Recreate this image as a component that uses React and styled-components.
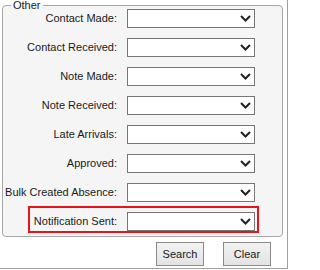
import React from 'react';
import styled, { createGlobalStyle } from 'styled-components';

const GlobalStyle = createGlobalStyle`
  html, body {
    margin: 0;
    padding: 0;
    background: #ffffff;
  }
  body {
    font-family: "Liberation Sans", Arial, sans-serif;
    font-size: 11px;
    color: #1a1a1a;
  }
`;

const Panel = styled.div`
  box-sizing: border-box;
  width: 288px;
  height: 269px;
  border-right: 1px solid #a0a0a0;
  border-bottom: 1px solid #a0a0a0;
  background: #ffffff;
  display: flex;
  flex-direction: column;
`;

const Group = styled.fieldset`
  box-sizing: border-box;
  width: 281px;
  margin: 0 0 0 2px;
  padding: 0 27px 3px 1px;
  border: 1px solid #a8a8a8;
  border-radius: 4px;
  background: #f5f5f5;
  min-width: 0;
`;

const Legend = styled.legend`
  margin-left: 7px;
  padding: 0 2px;
  font-size: 11px;
  line-height: 10px;
  color: #1a1a1a;
`;

const Row = styled.div`
  box-sizing: border-box;
  display: flex;
  align-items: center;
  margin-top: ${p => (p.highlight ? '4px' : p.first ? '-1px' : '10px')};
  margin-left: ${p => (p.highlight ? '24px' : '0')};
  margin-right: ${p => (p.highlight ? '-4px' : '0')};
  padding: ${p => (p.highlight ? '4px 2px 0 3px' : '0')};
  border: ${p => (p.highlight ? '2px solid #e8141b' : '0')};
`;

const Label = styled.label`
  flex: 1;
  min-width: 0;
  margin-right: 10px;
  text-align: right;
  white-space: nowrap;
  font-size: 11px;
  line-height: 13px;
`;

const SelectBox = styled.div`
  box-sizing: border-box;
  flex: none;
  width: 128px;
  height: 19px;
  border: 1px solid #767676;
  background: #ffffff;
  display: flex;
  align-items: center;
  justify-content: flex-end;
  padding-right: 3px;
`;

const Actions = styled.div`
  display: flex;
  justify-content: flex-end;
  gap: 19px;
  padding: 5px 16px 0 0;
`;

const Button = styled.button`
  box-sizing: border-box;
  width: 48px;
  height: 24px;
  padding: 0;
  border: 1px solid #8a8a8a;
  border-radius: 0;
  background: linear-gradient(#f2f2f2, #e3e3e3);
  font-family: "Liberation Sans", Arial, sans-serif;
  font-size: 11px;
  color: #1a1a1a;
  cursor: pointer;
`;

const Chevron = () => (
  <svg width="11" height="7" viewBox="0 0 11 7">
    <polyline
      points="1,1 5.5,5.5 10,1"
      fill="none"
      stroke="#222222"
      strokeWidth="2"
    />
  </svg>
);

const fields = [
  'Contact Made:',
  'Contact Received:',
  'Note Made:',
  'Note Received:',
  'Late Arrivals:',
  'Approved:',
  'Bulk Created Absence:',
];

export default function App() {
  return (
    <>
      <GlobalStyle />
      <Panel>
        <Group>
          <Legend>Other</Legend>
          {fields.map((name, i) => (
            <Row key={name} first={i === 0}>
              <Label>{name}</Label>
              <SelectBox>
                <Chevron />
              </SelectBox>
            </Row>
          ))}
          <Row highlight>
            <Label>Notification Sent:</Label>
            <SelectBox>
              <Chevron />
            </SelectBox>
          </Row>
        </Group>
        <Actions>
          <Button>Search</Button>
          <Button>Clear</Button>
        </Actions>
      </Panel>
    </>
  );
}
